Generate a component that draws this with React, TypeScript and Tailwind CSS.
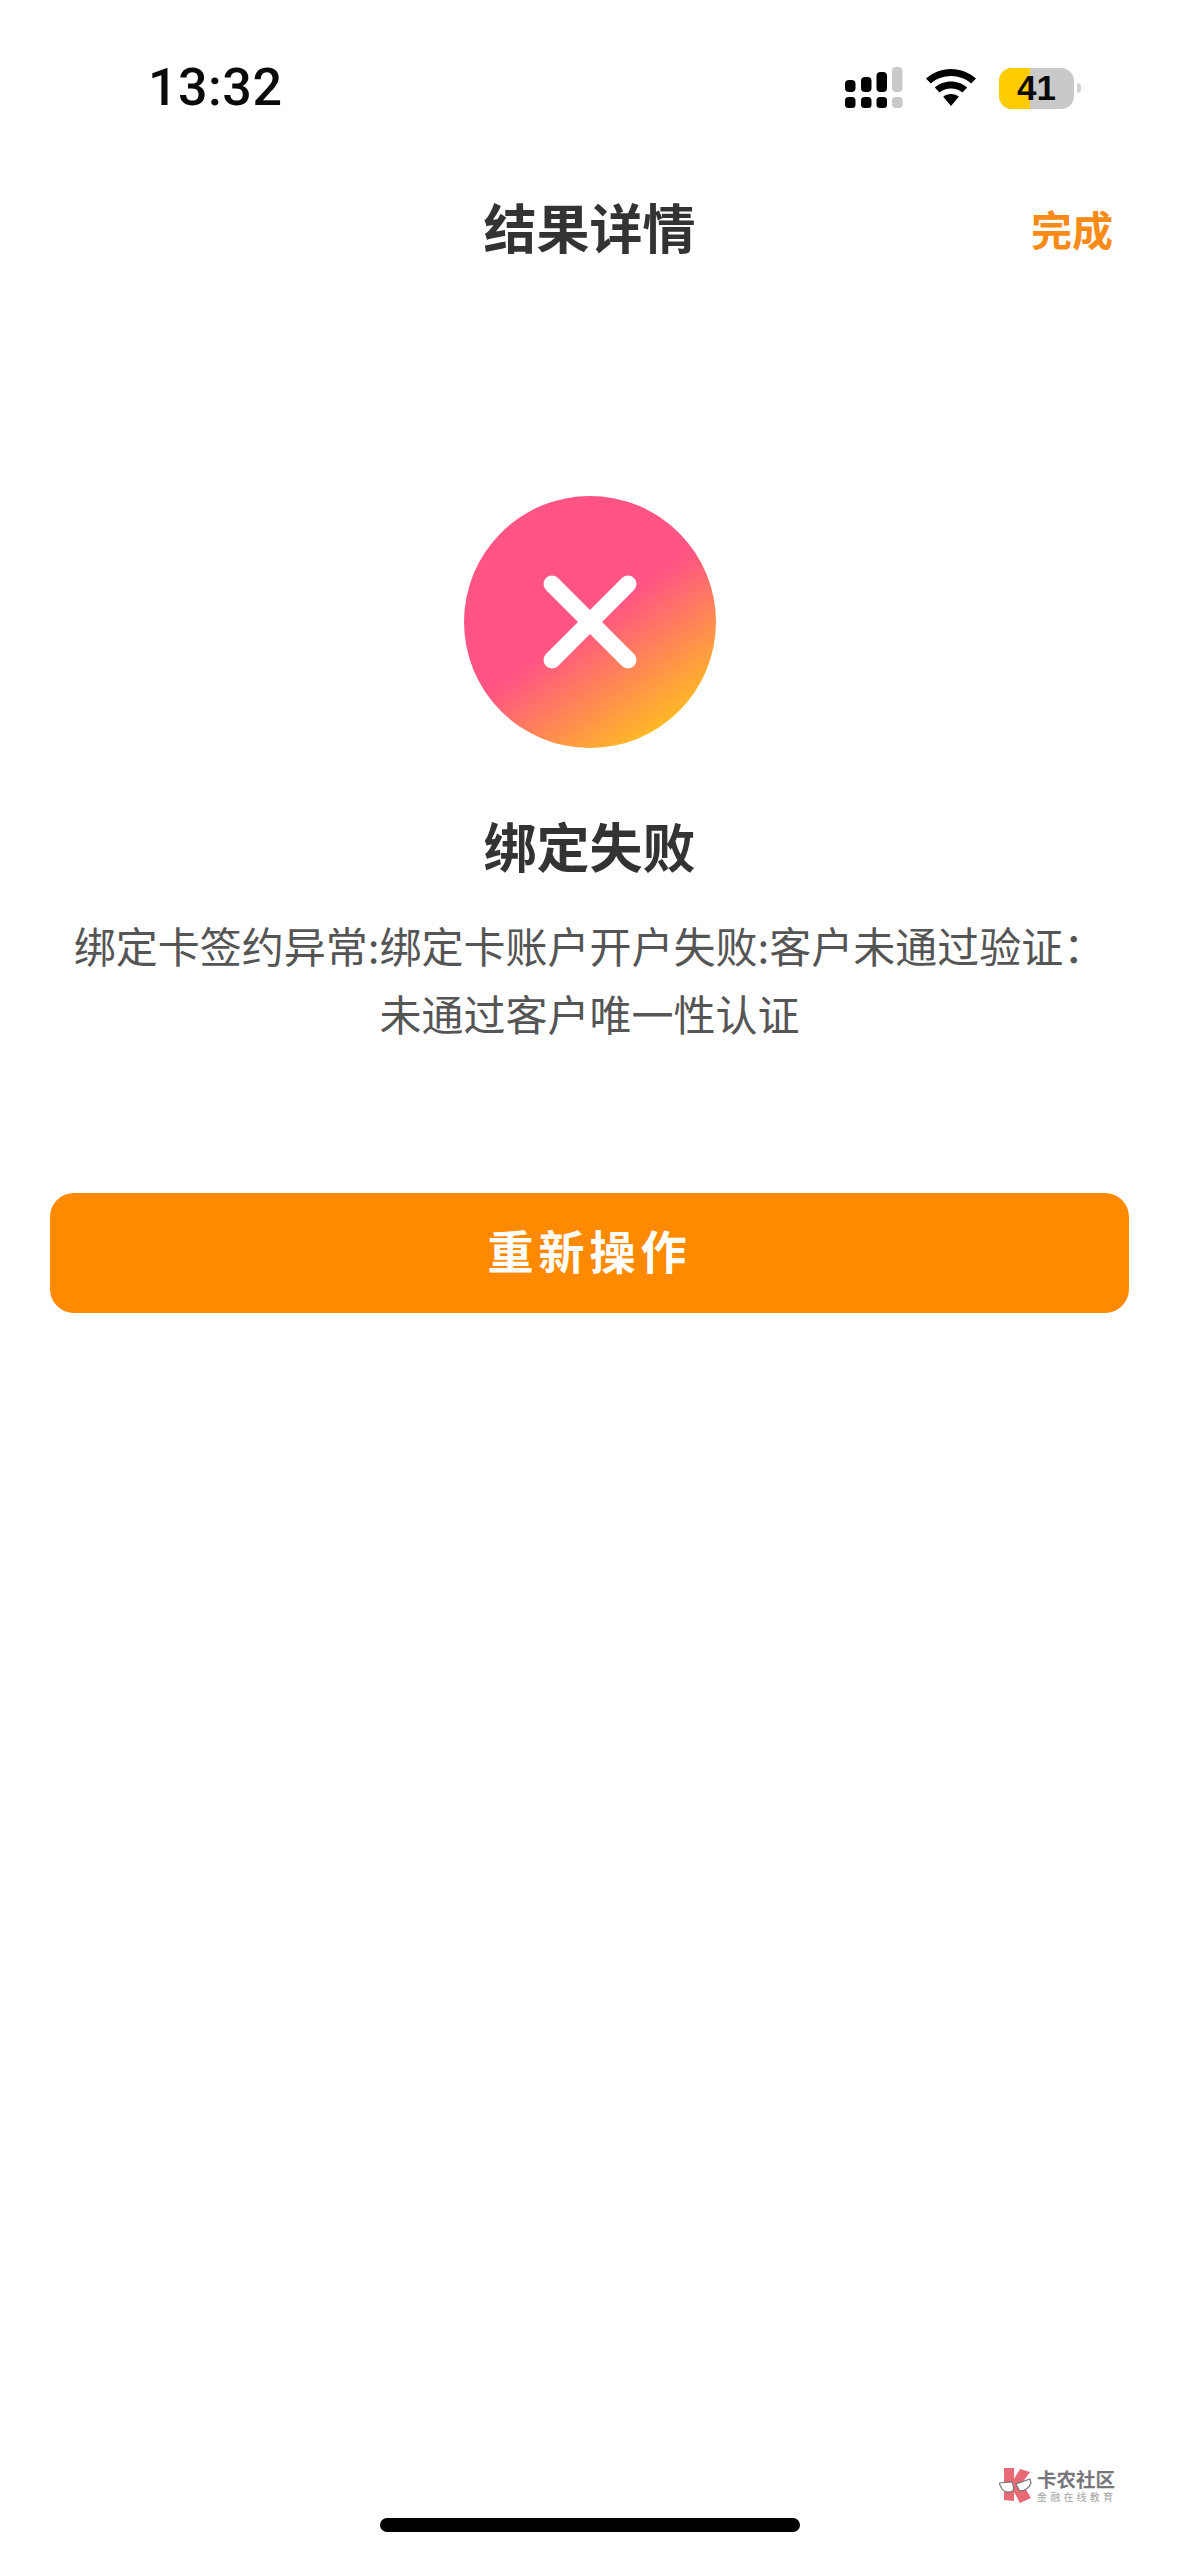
const cjk = 'font-["Noto_Sans_CJK_SC","Noto_Sans",sans-serif]'

function SignalIcon() {
  const cols = [
    { x: 0, top: 13, color: '#000000' },
    { x: 16, top: 10, color: '#000000' },
    { x: 31.500, top: 5, color: '#000000' },
    { x: 47, top: 0, color: '#c9c9c9' },
  ]
  return (
    <svg width="58" height="42" viewBox="0 0 58 42">
      {cols.map(c => (
        <g key={c.x} fill={c.color}>
          <rect x={c.x} y={c.top} width="10.500" height={25 - c.top} rx="4" />
          <rect x={c.x} y="30" width="10.500" height="11" rx="3.500" />
        </g>
      ))}
    </svg>
  )
}

function WifiIcon() {
  return (
    <svg width="50" height="38" viewBox="0 0 50 38">
      <path d="M25 0C15.500 0 6.800 3.700 0 9.500L4.800 14.500C10.200 9.800 17.300 7 25 7C32.700 7 39.800 9.800 45.200 14.500L50 9.500C43.200 3.700 34.500 0 25 0Z" fill="#000" />
      <path d="M25 12.500C18.800 12.500 13.100 14.800 8.800 18.500L13.600 23.500C16.700 20.900 20.700 19.400 25 19.400C29.300 19.400 33.300 20.900 36.400 23.500L41.200 18.500C36.900 14.800 31.200 12.500 25 12.500Z" fill="#000" />
      <path d="M25 25C22 25 19.300 26 17.200 27.800L25 37L32.800 27.800C30.700 26 28 25 25 25Z" fill="#000" />
    </svg>
  )
}

function Battery() {
  return (
    <div className="flex items-center gap-[3px]">
      <div className="relative h-[41px] w-[75px] overflow-hidden rounded-[13px] bg-[#c9c9c9]">
        <div className="h-full w-[31px] bg-[#ffcc00]" />
        <span className='absolute inset-0 flex items-center justify-center font-["Liberation_Sans",sans-serif] text-[35px] font-bold text-[#0a0a0a]'>
          41
        </span>
      </div>
      <div className="h-[10px] w-[4px] rounded-r-full bg-[#d2d2d2]" />
    </div>
  )
}

function FailIcon() {
  return (
    <div className="flex h-[252px] w-[252px] items-center justify-center rounded-full bg-[linear-gradient(145deg,#ff5484_50%,#ffcc14_93%)]">
      <svg width="94" height="94" viewBox="0 0 94 94">
        <path d="M9 9L85 85M85 9L9 85" stroke="#fff" strokeWidth="17" strokeLinecap="round" fill="none" />
      </svg>
    </div>
  )
}

// Watermark in the bottom corner
function Watermark() {
  return (
    <div className={`absolute left-[999px] top-[2468px] flex items-center gap-[5px] ${cjk}`}>
      <svg width="33" height="35" viewBox="0 0 33 35">
        <path d="M5 0H15V11L21 1L31 4L23 15L32 30L21 35L15 24V33L5 32Z" fill="#e96a76" />
        <path d="M0 15L13 14C15 18 15 20 14 23C10 25 5 24 3 21ZM17 16L31 11L32 15C30 21 24 24 20 22Z" fill="#fff" stroke="#777" strokeWidth="1.200" />
      </svg>
      <div className="flex flex-col">
        <span className="text-[19.500px] leading-[22px] font-bold whitespace-nowrap text-[#77777b]">卡农社区</span>
        <span className="text-[10px] leading-[13px] tracking-[3.200px] whitespace-nowrap text-[#a3a3a3]">金融在线教育</span>
      </div>
    </div>
  )
}

export default function App() {
  return (
    <div className={`relative flex h-[2556px] w-[1179px] flex-col overflow-hidden bg-white ${cjk}`}>
      {/* Status bar */}
      <div className="flex h-[118px] items-end justify-between pr-[98px] pl-[148px]">
        <span className='font-["Roboto",sans-serif] text-[52px] leading-[60px] font-medium tracking-[0.500px] text-[#0a0a0a]'>
          13:32
        </span>
        <div className="flex items-center gap-[23px] pb-[9px]">
          <SignalIcon />
          <WifiIcon />
          <Battery />
        </div>
      </div>

      {/* Nav bar */}
      <div className="relative mt-[76px] flex h-[64px] items-center justify-center">
        <h1 className="text-[53px] leading-[64px] font-bold text-[#333333]">结果详情</h1>
        <span className="absolute top-[4px] right-[66px] text-[41px] leading-[60px] font-bold text-[#f98a16]">完成</span>
      </div>

      {/* Result */}
      <div className="mt-[238px] flex flex-col items-center">
        <FailIcon />
        <h2 className="mt-[62px] text-[53px] leading-[70px] font-bold text-[#333333]">绑定失败</h2>
        <p className="mt-[31px] w-[1060px] text-center text-[42px] leading-[68px] text-[#555555]">
          绑定卡签约异常:绑定卡账户开户失败:客户未通过验证：
          <br />
          未通过客户唯一性认证
        </p>
      </div>

      <button className="mx-[50px] mt-[146px] h-[120px] rounded-[24px] bg-[#ff8a00] pb-[7px] text-[46px] font-bold tracking-[5px] text-white">
        重新操作
      </button>

      {/* Home indicator */}
      <div className="mx-auto mt-auto mb-[24px] h-[14px] w-[420px] rounded-full bg-black" />

      <Watermark />
    </div>
  )
}
